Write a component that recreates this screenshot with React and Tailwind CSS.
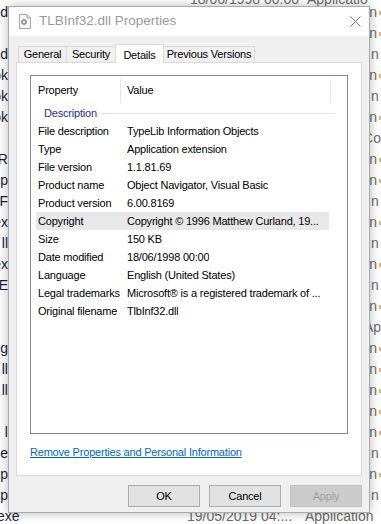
import React from "react";

const bgRows = [
  { left: "2.d", right: "n", dot: true },
  { left: "", right: "n", dot: true },
  { left: "nd", right: "n", dot: false },
  { left: "ok", right: "n", dot: true },
  { left: "ok", right: "n", dot: false },
  { left: "ok", right: "n", dot: true },
  { left: "", right: "Co", dot: false },
  { left: "R", right: "n", dot: true },
  { left: "p", right: "n", dot: true },
  { left: "eF", right: "n", dot: false },
  { left: "ex", right: "n", dot: true },
  { left: "ll", right: "n", dot: false },
  { left: "ex", right: "n", dot: true },
  { left: ".E", right: "n", dot: false },
  { left: "", right: "n", dot: true },
  { left: "", right: "Ap", dot: false },
  { left: "ig", right: "n", dot: true },
  { left: "ll", right: "n", dot: true },
  { left: "ll", right: "n", dot: true },
  { left: "", right: "n", dot: true },
  { left: "l", right: "n", dot: true },
  { left: "e.e", right: "n", dot: false },
  { left: "p", right: "n", dot: true },
  { left: "rp", right: "n", dot: false },
];

const details = [
  ["File description", "TypeLib Information Objects"],
  ["Type", "Application extension"],
  ["File version", "1.1.81.69"],
  ["Product name", "Object Navigator, Visual Basic"],
  ["Product version", "6.00.8169"],
  ["Copyright", "Copyright © 1996 Matthew Curland, 19..."],
  ["Size", "150 KB"],
  ["Date modified", "18/06/1998 00:00"],
  ["Language", "English (United States)"],
  ["Legal trademarks", "Microsoft® is a registered trademark of ..."],
  ["Original filename", "TlbInf32.dll"],
];

function Background() {
  return (
    <div className="flex flex-col text-[14px] whitespace-nowrap">
      <div className="h-[6px] overflow-hidden flex items-end">
        <div className="flex leading-[13px] text-[#6d6d6d]">
          <span className="w-[190px]" />
          <span className="w-[117px]">18/06/1998 00:00</span>
          <span>Applicatio</span>
        </div>
      </div>
      <div className="flex flex-col -mt-[4px]">
        {bgRows.map((r, i) => (
          <div key={i} className="h-[21px] flex items-center">
            <div className="w-[8px] overflow-hidden flex justify-end text-[#1c1c38]">
              {r.left}
            </div>
            <div className="w-[363px]" />
            <div className="flex items-center gap-[2px] text-[#6d6d6d]">
              <span>{r.right}</span>
              {r.dot && <span className="w-[2px] h-[4px] bg-[#f3b25e]" />}
            </div>
          </div>
        ))}
        <div className="h-[21px] flex items-center">
          <span className="w-[190px] text-[#1c1c38] -ml-[3px]">exe</span>
          <span className="w-[118px] text-[#6d6d6d]">19/05/2019 04:...</span>
          <span className="text-[#6d6d6d]">Application</span>
        </div>
      </div>
    </div>
  );
}

function FileIcon() {
  return (
    <svg width="12" height="15" viewBox="0 0 12 15">
      <path d="M0.5 0.5h7.5l3.5 3.5v10.5h-11z" fill="#f7f7f7" stroke="#a8a8a8" />
      <path d="M8 0.5v3.5h3.5" fill="none" stroke="#a8a8a8" />
      <circle cx="5" cy="8" r="2" fill="none" stroke="#8a8a8a" strokeWidth="1.4" />
      <path d="M5 5v1M5 10v1M2 8h1M7 8h1M3 6l.7.7M6.3 9.3l.7.7M3 10l.7-.7M6.3 6.7l.7-.7" stroke="#8a8a8a" />
    </svg>
  );
}

function Tab({ label, width, active }) {
  return active ? (
    <div
      className="h-[19px] -mb-px -ml-px relative z-10 bg-white border border-b-0 border-[#d9d9d9] flex items-start justify-center pt-[2px] text-black"
      style={{ width }}
    >
      {label}
    </div>
  ) : (
    <div
      className="h-[16px] -ml-px first:ml-0 bg-[#f0f0f0] border border-b-0 border-[#d9d9d9] flex items-center justify-center text-black"
      style={{ width }}
    >
      {label}
    </div>
  );
}

function Dialog() {
  return (
    <div className="absolute left-[8px] top-[6px] w-[362px] h-[507px] flex flex-col border border-[#aaaaaa] bg-[#f0f0f0] shadow-[0_0_10px_rgba(0,0,0,0.28)] font-['Liberation_Sans',Arial,sans-serif] text-[11px] tracking-[-0.2px] text-black">
      <div className="h-[29px] shrink-0 bg-white flex items-center pl-[10px]">
        <FileIcon />
        <span className="ml-[8px] text-[13.5px] tracking-normal text-[#999999]">TLBInf32.dll Properties</span>
        <svg className="ml-auto mr-[8px]" width="11" height="11" viewBox="0 0 11 11">
          <path d="M0.5 0.5l10 10M10.5 0.5l-10 10" stroke="#7a7a7a" strokeWidth="1" />
        </svg>
      </div>

      <div className="flex-1 flex flex-col px-[7px] pt-[8px] pb-[5px]">
        <div className="h-[18px] flex items-end pl-[2px]">
          <Tab label="General" width={49} />
          <Tab label="Security" width={50} />
          <Tab label="Details" width={49} active />
          <Tab label="Previous Versions" width={92} />
        </div>

        <div className="h-[414px] bg-white border border-[#d9d9d9] px-[13px] pt-[12px] flex flex-col">
          <div className="h-[359px] border border-[#828790] flex flex-col">
            <div className="h-[28px] flex items-center shrink-0">
              <div className="w-[89px] pl-[7px]">Property</div>
              <div className="w-px h-[24px] self-end mb-px bg-[#e5e5e5]" />
              <div className="w-[209px] pl-[6px]">Value</div>
              <div className="w-px h-[24px] self-end mb-px bg-[#e5e5e5]" />
            </div>
            <div className="h-[18px] flex items-center pl-[13px] pr-[12px]">
              <span className="text-[#1e3287]">Description</span>
              <div className="flex-1 h-px bg-[#e2e5ef] ml-[5px]" />
            </div>
            {details.map(([k, v]) => (
              <div
                key={k}
                className={`h-[18px] ml-[5px] w-[293px] flex items-center whitespace-nowrap ${
                  k === "Copyright" ? "bg-[#e8e8e8]" : ""
                }`}
              >
                <div className="w-[84px] pl-[2px] shrink-0">{k}</div>
                <div className="pl-[7px] overflow-hidden">{v}</div>
              </div>
            ))}
          </div>
          <div className="mt-[11px] leading-[15px]">
            <a href="#" className="text-[#0066cc] underline">
              Remove Properties and Personal Information
            </a>
          </div>
        </div>

        <div className="mt-[9px] flex justify-end gap-[9px]">
          <button className="w-[72px] h-[22px] border border-[#adadad] bg-[#e1e1e1] text-black">OK</button>
          <button className="w-[72px] h-[22px] border border-[#adadad] bg-[#e1e1e1] text-black">Cancel</button>
          <button className="w-[72px] h-[22px] border border-[#bfbfbf] bg-[#cccccc] text-[#a0a0a0]">Apply</button>
        </div>
      </div>
    </div>
  );
}

export default function App() {
  return (
    <div className="relative w-[381px] h-[524px] overflow-hidden bg-white font-['Liberation_Sans',Arial,sans-serif]">
      <Background />
      <Dialog />
    </div>
  );
}
